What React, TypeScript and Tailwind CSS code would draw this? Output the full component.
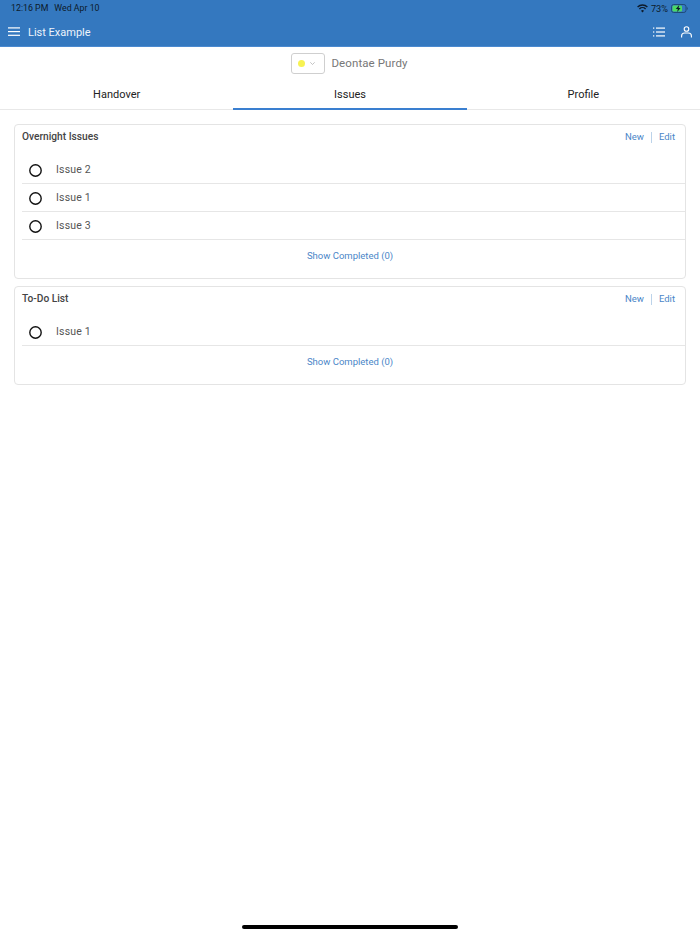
import { type FC } from "react";

const font = { fontFamily: "Roboto, 'Liberation Sans', sans-serif" };

const Row: FC<{ label: string }> = ({ label }) => {
  return (
    <li className="flex h-[28px] items-center border-b border-[#e6e6e6]">
      <svg className="ml-[7px] mt-[2px]" width="13" height="13" viewBox="0 0 13 13" fill="none" stroke="#111" strokeWidth="1.4">
        <circle cx="6.5" cy="6.5" r="5.7" />
      </svg>
      <span className="ml-[14px] pt-[1px] text-[10.5px] tracking-[0.2px] text-[#555]">{label}</span>
    </li>
  );
};

const Card: FC<{ title: string; items: string[] }> = ({ title, items }) => {
  return (
    <section className="rounded-[4px] border border-[#e4e4e4] pb-[7px] pl-[7px]">
      <div className="mb-[8px] flex h-[23px] items-center justify-between pr-[10px]">
        <h2 className="text-[10.2px] font-medium text-[#444]">{title}</h2>
        <div className="flex items-center pt-[1px] text-[9.5px] text-[#4a86c8]">
          <span>New</span>
          <span className="mx-[7px] h-[11px] w-px bg-[#bcd3ea]"></span>
          <span>Edit</span>
        </div>
      </div>
      <ul>
        {items.map((item, i) => {
          return <Row key={i} label={item} />;
        })}
      </ul>
      <div className="flex h-[31px] items-center justify-center pr-[7px] pt-[2px] text-[9.5px] text-[#4a86c8]">
        Show Completed (0)
      </div>
    </section>
  );
};

export default function App() {
  return (
    <div className="flex h-[934px] w-[700px] flex-col overflow-hidden bg-white" style={font}>
      <header className="h-[47px] shrink-0 border-b border-[#4b8ad0] bg-[#3478bf]">
        <div className="flex h-[17px] items-center justify-between pl-[11px] pr-[12px] pt-[1px] text-[8.8px] text-[#0d1a2a]">
          <div className="flex gap-[6px]">
            <span>12:16 PM</span>
            <span>Wed Apr 10</span>
          </div>
          <div className="flex items-center gap-[3px]">
            <svg width="11" height="9" viewBox="0 0 11 9" fill="none" stroke="#0d1a2a">
              <path d="M.6 3A7 7 0 0 1 10.4 3" strokeWidth="1.4" />
              <path d="M2.4 4.9A4.4 4.4 0 0 1 8.6 4.9" strokeWidth="1.4" />
              <path d="M5.5 8.6 L4 6.8A2 2 0 0 1 7 6.8Z" fill="#0d1a2a" stroke="none" />
            </svg>
            <span className="text-[9.2px]">73%</span>
            <svg width="17" height="9" viewBox="0 0 17 9" fill="none">
              <rect x="0.5" y="0.5" width="14.5" height="8" rx="2.2" stroke="#1f4a78" />
              <rect x="1.5" y="1.5" width="9.5" height="6" rx="1.2" fill="#4cd964" />
              <path d="M15.8 3v3c.6-.2 1-.8 1-1.5s-.4-1.3-1-1.5Z" fill="#1f4a78" />
              <path d="M8.2 1 4.8 5h2l-.6 3 3.4-4h-2Z" fill="#0d1a2a" />
            </svg>
          </div>
        </div>
        <div className="flex h-[29px] items-center justify-between pl-[8px] pr-[8px] text-white">
          <div className="flex items-center">
            <svg width="12" height="9" viewBox="0 0 12 9" fill="#fff">
              <rect y="0.3" width="12" height="1.2" />
              <rect y="4" width="12" height="1.2" />
              <rect y="7.7" width="12" height="1.2" />
            </svg>
            <span className="ml-[8px] pt-[3px] text-[11px] text-[#eef4fb]">List Example</span>
          </div>
          <div className="flex items-center gap-[16px]">
            <svg width="12" height="10" viewBox="0 0 12 10" fill="#fff">
              <rect x="0" y="0.5" width="1.3" height="1.2" />
              <rect x="0" y="4.4" width="1.3" height="1.2" />
              <rect x="0" y="8.3" width="1.3" height="1.2" />
              <rect x="3" y="0.5" width="9" height="1.2" />
              <rect x="3" y="4.4" width="9" height="1.2" />
              <rect x="3" y="8.3" width="9" height="1.2" />
            </svg>
            <svg width="11" height="12" viewBox="0 0 11 12" fill="none" stroke="#fff" strokeWidth="1.1">
              <circle cx="5.5" cy="3" r="2.3" />
              <path d="M.6 11.5V10c0-1.7 1.4-3 3-3h3.8c1.6 0 3 1.3 3 3v1.5" />
            </svg>
          </div>
        </div>
      </header>

      <div className="flex h-[33px] shrink-0 items-center justify-center">
        <button className="-ml-[1px] flex h-[21px] w-[34px] items-center gap-[5px] rounded-[3px] border border-[#cfcfcf] pl-[6px]">
          <span className="h-[7px] w-[7px] rounded-full bg-[#f7f252]"></span>
          <svg width="5" height="3" viewBox="0 0 5 3" fill="none" stroke="#aaa" strokeWidth="0.7">
            <path d="M.3.3 2.5 2.5 4.7.3" />
          </svg>
        </button>
        <span className="ml-[6px] pt-[1px] text-[11.5px] tracking-[0.1px] text-[#777]">Deontae Purdy</span>
      </div>

      <nav className="grid h-[30px] shrink-0 grid-cols-3 border-b border-[#e8e8e8] text-[11px] text-[#222]">
        <div className="flex items-center justify-center pt-[2px]">Handover</div>
        <div className="-mb-px flex items-center justify-center border-b-2 border-[#3a7fd0] pt-[2px]">Issues</div>
        <div className="flex items-center justify-center pt-[2px]">Profile</div>
      </nav>

      <main className="flex flex-col gap-[7px] px-[14px] pt-[14px]">
        <Card title="Overnight Issues" items={["Issue 2", "Issue 1", "Issue 3"]} />
        <Card title="To-Do List" items={["Issue 1"]} />
      </main>

      <div className="mt-auto flex justify-center pb-[5px]">
        <div className="h-[4px] w-[216px] rounded-full bg-black"></div>
      </div>
    </div>
  );
}
